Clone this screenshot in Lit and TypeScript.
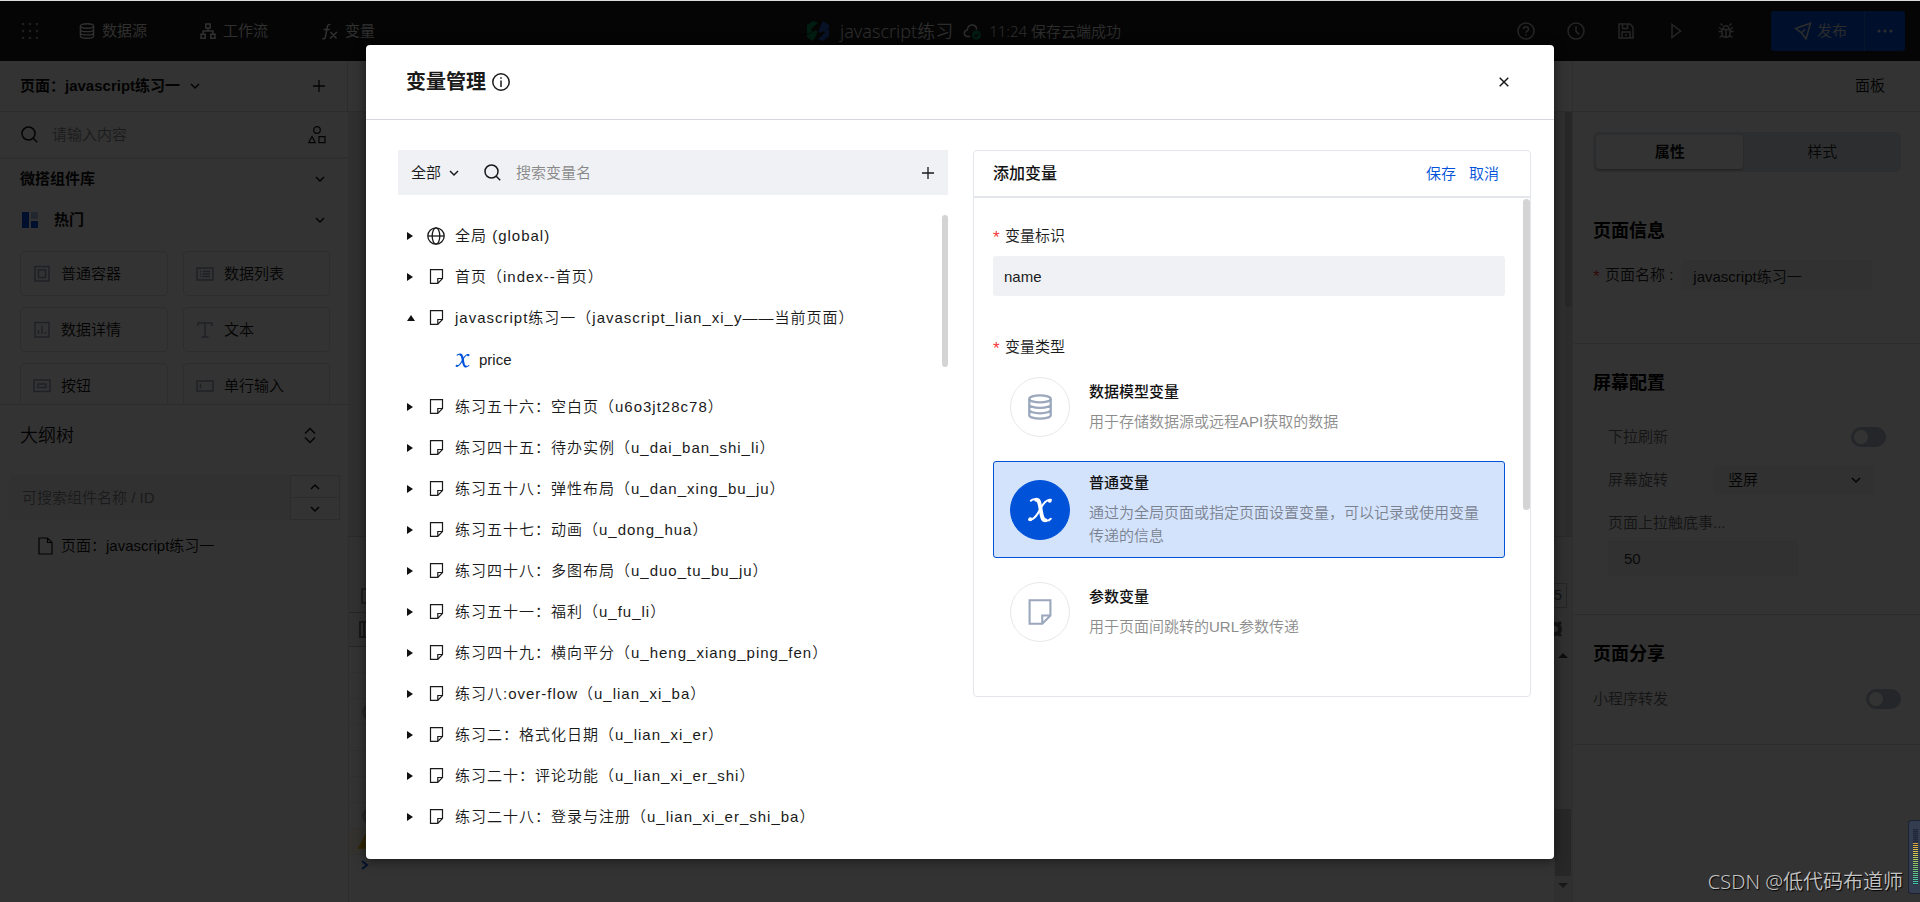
import { LitElement, html, css, svg, TemplateResult, SVGTemplateResult } from "lit";
import { customElement, state } from "lit/decorators.js";
import { classMap } from "lit/directives/class-map.js";

const icon = (size: number, body: SVGTemplateResult, height = size): TemplateResult =>
  html`<svg class="icon" aria-hidden="true" width=${size} height=${height} viewBox="0 0 ${size} ${height}"
    fill="none" stroke="currentColor" stroke-width="1.5">${body}</svg>`;

const icons = {
  grid: () => icon(16, svg`${[1, 8, 15].map((y) => [1, 8, 15].map((x) =>
    svg`<circle cx=${x} cy=${y} r="1.3" fill="currentColor" stroke="none"/>`))}`),
  database: (s = 16) => html`<svg class="icon" aria-hidden="true" width=${s} height=${s} viewBox="0 0 16 16"
    fill="none" stroke="currentColor" stroke-width="1.4"><ellipse cx="8" cy="3" rx="6.6" ry="2.2"/>
    <path d="M1.4 3v10c0 1.2 2.9 2.2 6.6 2.2s6.6-1 6.6-2.2V3M1.4 6.4c0 1.2 2.9 2.2 6.6 2.2s6.6-1 6.6-2.2M1.4 9.7c0 1.2 2.9 2.2 6.6 2.2s6.6-1 6.6-2.2"/></svg>`,
  workflow: () => icon(16, svg`<path d="M5.8 1h4.4v4H5.8zM1 11.2h4.2v4H1zM10.8 11.2H15v4h-4.2zM8 5v3M3.1 11V8h9.8v3"/>`),
  fx: () => icon(17, svg`<path d="M9.5 1.6C7.6.9 6.7 1.9 6.3 4L4.5 13.5c-.4 2-1.2 2.7-3.2 2.2M2.7 6.5h6M9.5 9l6 6.5M16 9l-7 6.5"/>`),
  help: () => icon(18, svg`<circle cx="9" cy="9" r="8"/><path d="M6.5 7.200c0-3.200 5-3.200 5 0 0 1.700-2.500 1.700-2.500 3.600M9 12.200v1.500"/>`),
  clock: () => icon(18, svg`<circle cx="9" cy="9" r="8"/><path d="M9 4v5.200l3.200 3.200"/>`),
  save: () => icon(18, svg`<path d="M2 2h11l3 3v11H2zM5 16v-6h8v6M5.500 2v4.500h5V2M9 12v2"/>`),
  play: () => icon(18, svg`<path d="M5 2.500v13L13.500 9z"/>`),
  bug: () => icon(18, svg`<path d="M5 7.500h8v4c0 5-8 5-8 0zM6 7.300c0-4.800 6-4.800 6 0M9 8v7M5.500 3.500l-2-2M12.500 3.500l2-2M1.500 9.500H5M13 9.500h3.500M2 5.500l3 2M16 5.500l-3 2M2.500 15.500l3-2M15.500 15.500l-3-2"/>`),
  plane: () => icon(18, svg`<path d="M1.500 6.500L16.500 1.200 12 17 7.500 10.800zM7.500 10.800l3.500-3.600"/>`),
  more: () => icon(16, svg`<g fill="currentColor" stroke="none"><circle cx="2" cy="3" r="1.500"/><circle cx="8" cy="3" r="1.500"/><circle cx="14" cy="3" r="1.500"/></g>`, 6),
  logo: () => icon(24, svg`<g stroke="none"><path fill="#088a58" d="M7 1l5 2L6 8c-1.500 1.500-1 2.500.5 3.500L1 14V5zM1 15l9-5 1.500 2L9 18l-3 3-5-4z"/>
    <path fill="#2a5bc4" d="M17 1l6 4v3l-9 5-1.500-2L15 5zM23 9v7l-6 5-5-2 6-5c1.500-1.500 1-2.500-.5-3.500z"/></g>`, 22),
  cloud: () => icon(19, svg`<path d="M7 13.500H4.500C0 13 .5 7.500 4.300 7 5 .5 13 .5 13.700 6.500"/>
    <circle cx="13.500" cy="12" r="4.500" fill="#088a58" stroke="none"/><path stroke="#222" d="M11.500 12l1.500 1.500 2.500-2.700"/>`, 17),
  down: (s = 10) => html`<svg class="icon" aria-hidden="true" width=${s} height=${s} viewBox="0 0 10 10" fill="none"
    stroke="currentColor" stroke-width="1.5"><path d="M1 3l4 4 4-4"/></svg>`,
  up: () => icon(10, svg`<path d="M1 7l4-4 4 4"/>`),
  plus: () => icon(12, svg`<path stroke-width="1.300" d="M6 0v12M0 6h12"/>`),
  search: () => icon(17, svg`<circle cx="7.500" cy="7.500" r="6.500"/><path d="M12.200 12.200l4 4"/>`),
  shapes: () => icon(18, svg`<g stroke-width="1.200"><circle cx="9" cy="4" r="3.300"/><path d="M4 10.500l-3.300 6.200h6.600zM11 10.700h6v6h-6z"/></g>`),
  hot: () => icon(16, svg`<g stroke="none"><path fill="#0052d9" d="M0 0h7v16H0zM9 9h7v7H9z"/><path fill="#a9bfe8" d="M9 0h7v7H9z"/></g>`),
  sort: () => icon(12, svg`<path d="M1 6.500l5-5 5 5M1 10.500l5 5 5-5"/>`, 17),
  file: () => icon(15, svg`<path stroke-width="1.200" d="M1 1h8.500L14 5.500V17H1zM9.500 1v4.500H14"/>`, 18),
  container: () => icon(18, svg`<rect x="2" y="1.500" width="14" height="14.500"/><rect x="5.500" y="5" width="7" height="7.500"/>`),
  list: () => icon(18, svg`<rect x="1" y="3" width="16" height="12"/><path d="M4 6.500h1M6.500 6.500H14M4 9h1M6.500 9H14M4 11.500h1M6.500 11.500H14"/>`),
  chart: () => icon(18, svg`<rect x="2" y="1.500" width="14" height="14.500"/><path d="M5.500 13V9M9 13V4.500M12.500 13v-2"/>`),
  text: () => icon(18, svg`<path d="M2 5V2h14v3M9 2v14M5.500 16h7"/>`),
  button: () => icon(18, svg`<rect x="1" y="3" width="16" height="11.500"/><rect x="5" y="7" width="8" height="3.500"/>`),
  input: () => icon(18, svg`<rect x="1" y="4" width="16" height="10"/><path d="M4.500 6.500v5"/>`),
  info: () => icon(18, svg`<circle cx="9" cy="9" r="8.200"/><path d="M9 7.500V14M9 4.200v1.600"/>`),
  close: () => icon(10, svg`<path d="M.7.700l8.600 8.600M9.300.700L.7 9.300"/>`),
  globe: () => icon(18, svg`<g stroke-width="1.300"><circle cx="9" cy="9" r="8.200"/><ellipse cx="9" cy="9" rx="3.800" ry="8.200"/><path d="M1 9h16"/></g>`),
  page: (s = 15) => html`<svg class="icon" aria-hidden="true" width=${s} height=${s} viewBox="0 0 15 15" fill="none"
    stroke="currentColor" stroke-width="1.200"><path d="M1.500.7h12v8.800l-4.700 4.800H1.500zM13.500 9.500H8.800v4.800"/></svg>`,
  variable: (s: number) => html`<svg class="icon" aria-hidden="true" width=${s} height=${s} viewBox="0 0 24 24" fill="none"
    stroke="currentColor" stroke-linecap="round"><path stroke-width="3.600" d="M8.500 2.500c3 0 3 3 4 8.500s1.300 10.500 4.500 10.500"/>
    <path stroke-width="1.800" d="M3.500 3.500C5 2 7.500 1.800 9 2.500M22 2.500c-5-.5-8 5-10 9S7 21.500 2 21M16 21.700c2 .5 4.500.3 6-1.700"/>
    <circle cx="21" cy="3.500" r="1.300" fill="currentColor"/><circle cx="3" cy="20.500" r="1.300" fill="currentColor"/></svg>`,
};

const base = css`
  *, *::before, *::after { box-sizing: border-box; }
  button, input, select { font: inherit; color: inherit; margin: 0; padding: 0; border: 0; background: none; border-radius: 0; outline: none; }
  button { cursor: pointer; text-align: left; }
  h1, h2, h3, p, ul { margin: 0; padding: 0; font-weight: inherit; font-size: inherit; list-style: none; }
  .icon { display: block; flex: none; }
  .grow { flex: 1; min-width: 0; }
  .hidden { position: absolute; width: 1px; height: 1px; overflow: hidden; clip-path: inset(50%); }
  ::placeholder { color: #888; opacity: 1; }
`;

@customElement("top-bar")
class TopBar extends LitElement {
  static styles = [base, css`
    .bar { display: grid; grid-template-columns: 1fr auto 1fr; align-items: center; height: 60px; padding: 0 15px 0 22px; background: #191919; color: #eee; }
    .nav, .title, .tools, .entry { display: flex; align-items: center; }
    .nav { gap: 53px; }
    .apps { margin-right: -12px; color: #999; display: flex; }
    .entry { gap: 7px; }
    .title { gap: 10px; font-family: "Noto Sans", "Noto Sans CJK SC", sans-serif; font-size: 18px; font-weight: 350; color: #ddd; }
    .status { font-size: 15px; margin-left: -3px; }
    .tools { justify-content: flex-end; gap: 32px; color: #bbb; }
    .publish { display: flex; height: 40px; margin-left: 4px; background: #0052d9; border-radius: 3px; overflow: hidden; color: #ddd; }
    .send { display: flex; align-items: center; gap: 5px; padding: 0 17px 0 23px; }
    .extra { display: flex; align-items: center; padding: 0 12px; border-left: 1px solid #2a6de0; }
  `];
  render() {
    return html`<header class="bar">
      <nav class="nav">
        <button class="apps" aria-label="应用">${icons.grid()}</button>
        <button class="entry">${icons.database()}数据源</button>
        <button class="entry">${icons.workflow()}工作流</button>
        <button class="entry">${icons.fx()}变量</button>
      </nav>
      <div class="title">${icons.logo()}<span>javascript练习</span>${icons.cloud()}<span class="status">11:24 保存云端成功</span></div>
      <div class="tools">
        <button aria-label="帮助">${icons.help()}</button>
        <button aria-label="历史">${icons.clock()}</button>
        <button aria-label="保存">${icons.save()}</button>
        <button aria-label="预览">${icons.play()}</button>
        <button aria-label="调试">${icons.bug()}</button>
        <div class="publish"><button class="send">${icons.plane()}发布</button><button class="extra" aria-label="更多">${icons.more()}</button></div>
      </div>
    </header>`;
  }
}

@customElement("side-bar")
class SideBar extends LitElement {
  static styles = [base, css`
    :host { display: flex; flex-direction: column; min-height: 0; background: #fff; color: #111; }
    .row { display: flex; align-items: center; flex: none; }
    .head { height: 51px; border-bottom: 1px solid #ddd; border-right: 1px solid #ddd; padding: 0 22px 0 20px; font-weight: 600; gap: 10px; }
    .search { height: 47px; border-bottom: 2px solid #eaeaea; padding: 0 22px 0 21px; gap: 14px; }
    .search input { width: 100%; }
    .push { margin-left: auto; }
    .palette { flex: 246 1 0; min-height: 0; overflow: hidden; border-bottom: 1px solid #ddd; }
    .group { height: 39px; padding: 0 23px 0 20px; font-weight: 600; justify-content: space-between; }
    .hot { height: 44px; padding: 0 23px 0 22px; gap: 16px; font-weight: 600; }
    .cards { display: grid; grid-template-columns: 148fr 147fr; gap: 11px 15px; padding: 9px 18px 9px 20px; }
    .card { display: flex; align-items: center; gap: 10px; height: 45px; padding-left: 12px; border: 1px solid #e0e2e6; border-radius: 4px; }
    .card .icon { color: #98a2b7; }
    .outline { flex: 498 1 0; min-height: 0; }
    .title { height: 61px; padding: 0 32px 0 20px; font-size: 18px; justify-content: space-between; }
    .finder { margin: 9px 8px 0 10px; height: 45px; background: #f3f4f7; }
    .finder input { flex: 1; min-width: 0; height: 100%; padding: 0 12px; }
    .steps { display: flex; flex-direction: column; width: 50px; height: 45px; border: 1px solid #ddd; background: #fff; }
    .steps button { flex: 1; display: flex; align-items: center; justify-content: center; }
    .steps button + button { border-top: 1px solid #ddd; }
    .node { height: 51px; padding-left: 38px; gap: 8px; width: 100%; }
  `];
  private cards: [string, () => TemplateResult][] = [
    ["普通容器", icons.container], ["数据列表", icons.list], ["数据详情", icons.chart],
    ["文本", icons.text], ["按钮", icons.button], ["单行输入", icons.input],
  ];
  render() {
    return html`
      <div class="row head"><span>页面：javascript练习一</span>${icons.down()}<button class="push" aria-label="新建页面">${icons.plus()}</button></div>
      <label class="row search">${icons.search()}<input aria-label="搜索组件" placeholder="请输入内容">${icons.shapes()}</label>
      <section class="palette">
        <h2 class="row group">微搭组件库${icons.down()}</h2>
        <h3 class="row hot">${icons.hot()}热门<span class="push">${icons.down()}</span></h3>
        <div class="cards">${this.cards.map(([name, draw]) => html`<button class="card">${draw()}${name}</button>`)}</div>
      </section>
      <section class="outline">
        <h2 class="row title">大纲树${icons.sort()}</h2>
        <div class="row finder"><input aria-label="搜索大纲" placeholder="可搜索组件名称 / ID">
          <div class="steps"><button aria-label="上一个">${icons.up()}</button><button aria-label="下一个">${icons.down()}</button></div></div>
        <button class="row node">${icons.file()}页面：javascript练习一</button>
      </section>`;
  }
}

@customElement("work-canvas")
class WorkCanvas extends LitElement {
  static styles = [base, css`
    :host { display: flex; flex-direction: column; min-width: 0; background: #fff; }
    .head { height: 51px; border-bottom: 1px solid #ddd; }
    .stage { flex: 425 1 0; display: flex; justify-content: flex-end; background: #eaeaea; border-bottom: 1px solid #d0d0d0; }
    .bar { width: 7px; background: #dcdcdc; }
    .thumb { height: 46%; background: #c0c0c0; border-radius: 0 0 4px 4px; }
    .console { flex: 365 1 0; display: flex; justify-content: space-between; border-left: 1px solid #e0e0e0; }
    .log { flex: 1; display: flex; flex-direction: column; }
    .tab { height: 76px; padding: 51px 0 0 12px; background: #f3f6f8; border-bottom: 1px solid #bbb; color: #777; }
    .tab + .tab { height: 34px; padding: 8px 0 0 10px; }
    .line { height: 26px; border-bottom: 1px solid #eee; padding-left: 13px; display: flex; align-items: center; }
    .dot { width: 18px; height: 18px; border-radius: 9px; background: #c4bccb; }
    .warn { background: #fffbe5; padding-left: 9px; color: #f5b400; }
    .prompt { padding: 5px 0 0 12px; color: #1a56db; }
    .edge { width: 18px; display: flex; flex-direction: column; align-items: center; background: #f1f1f1; }
    .chip { align-self: flex-start; width: 13px; height: 25px; margin-top: 46px; border: 1px solid #bbb; border-left: 0; color: #555; font-size: 14px; line-height: 23px; }
    .gear { margin: 13px 0 16px; align-self: flex-start; color: #666; width: 8px; overflow: hidden; }
    .caret { border: 5px solid transparent; border-bottom: 5px solid #444; border-top: 0; }
    .caret.down { border-top: 5px solid #777; border-bottom: 0; margin: 7px 0 14px; }
    .track { flex: 1; width: 16px; display: flex; flex-direction: column; justify-content: flex-end; }
    .slab { height: 67px; background: #c1c1c1; }
  `];
  render() {
    return html`<div class="head"></div>
      <div class="stage"><div class="bar"><div class="thumb"></div></div></div>
      <div class="console">
        <div class="log">
          <div class="tab">${icon(14, svg`<rect x="1" y="1" width="12" height="14"/>`, 16)}</div>
          <div class="tab">${icon(16, svg`<path d="M1 1h14v15H1zM5 1v15" stroke-width="2"/>`, 17)}</div>
          ${[0, 0, 1, 0, 0, 0, 1].map((d) => html`<div class="line">${d ? html`<span class="dot"></span>` : ""}</div>`)}
          <div class="line warn">${icon(16, svg`<path d="M8 1l7 13H1z" fill="currentColor"/><path stroke="#fff" d="M8 5v5M8 11.500v1.500"/>`, 15)}</div>
          <div class="prompt">${icon(8, svg`<path d="M1 1l5 4-5 4" stroke-width="2"/>`, 10)}</div>
        </div>
        <div class="edge">
          <div class="chip">5</div>
          <div class="gear">${icon(12, svg`<circle cx="1" cy="8" r="5" stroke-width="4"/><path stroke-width="3" d="M4 4l3-3M4 12l3 3"/>`, 16)}</div>
          <i class="caret"></i>
          <div class="track"><div class="slab"></div></div>
          <i class="caret down"></i>
        </div>
      </div>`;
  }
}

@customElement("property-panel")
class PropertyPanel extends LitElement {
  static styles = [base, css`
    :host { display: flex; flex-direction: column; background: #fff; color: #222; border-left: 1px solid #e6e6e6; }
    .head { height: 51px; border-bottom: 1px solid #ddd; padding-right: 35px; display: flex; align-items: center; justify-content: flex-end; color: #111; }
    .tabs { display: flex; margin: 20px 19px 0 20px; height: 40px; padding: 3px 0 3px 3px; background: #e0e5ec; border-radius: 6px; }
    .tab { flex: 157; text-align: center; border-radius: 4px; }
    .tab.on { flex: 147; background: #fff; font-weight: 600; color: #111; box-shadow: 0 1px 2px #999; }
    .section { padding: 0 19px; border-bottom: 1px solid #ddd; margin-left: 1px; }
    .first { padding-top: 46px; padding-bottom: 53px; }
    .second { padding-top: 26px; padding-bottom: 38px; }
    .third { padding-top: 26px; padding-bottom: 33px; }
    .title { font-size: 18px; font-weight: 700; line-height: 26px; color: #000; }
    .row { display: flex; align-items: center; }
    .name { margin-top: 16px; height: 30px; gap: 3px; }
    .star { color: #f5373c; width: 9px; font-size: 17px; line-height: 18px; height: 14px; }
    .name input { flex: 1; margin: 0 29px 0 6px; height: 30px; background: #f3f3f5; padding: 0 11px; min-width: 0; }
    .muted { color: #666; }
    .indent { padding: 0 15px; }
    .toggle { appearance: none; width: 35px; height: 20px; border-radius: 10px; background: #b4bccb; padding: 3px; margin-left: auto; }
    .toggle::before { content: ""; display: block; width: 14px; height: 14px; border-radius: 7px; background: #fff; }
    .pull { margin-top: 29px; height: 24px; }
    .turn { margin-top: 16px; height: 30px; gap: 46px; }
    .picker { flex: 1; display: flex; align-items: center; background: #f3f3f5; height: 30px; padding: 0 12px 0 14px; margin-right: 13px; color: #111; }
    .picker select { appearance: none; flex: 1; }
    .reach { margin-top: 17px; line-height: 22px; }
    .count { display: block; width: 190px; height: 35px; margin: 7px 15px 0; padding: 0 15px; background: #f3f3f5; border: 1px solid #eee; color: #333; }
    .share { margin-top: 20px; height: 24px; }
  `];
  render() {
    return html`
      <div class="head">面板</div>
      <div class="tabs"><button class="tab on">属性</button><button class="tab">样式</button></div>
      <section class="section first">
        <h2 class="title">页面信息</h2>
        <label class="row name"><span class="star">*</span><span>页面名称 :</span><input .value=${"javascript练习一"}></label>
      </section>
      <section class="section second">
        <h2 class="title">屏幕配置</h2>
        <label class="row muted indent pull">下拉刷新<input class="toggle" type="checkbox"></label>
        <label class="row muted indent turn">屏幕旋转<span class="picker"><select><option>竖屏</option></select>${icons.down()}</span></label>
        <label class="muted"><p class="indent reach">页面上拉触底事...</p><input class="count" .value=${"50"}></label>
      </section>
      <section class="section third">
        <h2 class="title">页面分享</h2>
        <label class="row muted share">小程序转发<input class="toggle" type="checkbox"></label>
      </section>`;
  }
}

interface Scope { label: string; glyph?: "globe"; variables?: string[]; }

@customElement("variable-dialog")
class VariableDialog extends LitElement {
  static styles = [base, css`
    :host { display: block; background: #fff; border-radius: 4px; color: #1a1a1a; }
    .head { display: flex; align-items: center; height: 75px; padding: 0 45px 0 40px; border-bottom: 1px solid #d5d8e2; }
    .head h1 { font-size: 20px; font-weight: 600; margin-right: 6px; line-height: 28px; }
    .close { margin-left: auto; }
    .body { display: grid; grid-template-columns: 550fr 558fr; gap: 25px; align-items: start; padding: 30px 23px 22px 32px; }
    .filter { display: flex; align-items: center; height: 45px; padding: 0 14px 0 13px; background: #f0f1f5; }
    .kind { display: flex; align-items: center; gap: 7px; margin-right: 25px; }
    .kind select { appearance: none; }
    .filter input { flex: 1; min-width: 0; margin-left: 15px; height: 100%; }
    .tree { position: relative; margin-top: 20px; }
    .tree::after { content: ""; position: absolute; top: 0; right: 0; width: 6px; height: 152px; border-radius: 3px; background: #d4d4d4; }
    .scope { display: flex; align-items: center; width: 100%; height: 41px; padding-left: 9px; letter-spacing: 1px; }
    .arrow { width: 22px; display: flex; }
    .arrow::before { content: ""; border: 4px solid transparent; border-left: 6px solid #111; border-right: 0; }
    .arrow.open::before { border: 4px solid transparent; border-bottom: 6px solid #111; border-top: 0; }
    .glyph { width: 26px; display: flex; }
    .glyph.wide { margin-left: -2px; width: 28px; }
    .item { display: flex; align-items: center; gap: 9px; width: 100%; height: 48px; padding-left: 57px; padding-bottom: 4px; }
    .item .icon { color: #0052d9; }
    .panel { position: relative; border: 1px solid #e3e6eb; border-radius: 4px; }
    .bar { display: flex; align-items: center; gap: 13px; height: 47px; padding: 0 31px 0 19px; border-bottom: 2px solid #e3e6eb; }
    .bar h2 { font-size: 16px; font-weight: 500; color: #111; flex: 1; }
    .bar button { color: #0052d9; }
    .form { padding: 27px 25px 47px 19px; line-height: 22px; }
    .form::after { content: ""; position: absolute; top: 48px; right: 0; width: 7px; height: 311px; border-radius: 4px; background: #d4d4d4; }
    .need { display: flex; gap: 4px; }
    .need::before { content: "*"; color: #f5373c; width: 8px; font-size: 17px; line-height: 26px; height: 22px; }
    .field { display: block; width: 100%; height: 40px; margin: 9px 0 40px; padding: 0 11px; background: #f0f1f5; border-radius: 3px; }
    .types { display: flex; flex-direction: column; gap: 17px; margin-top: 12px; }
    .type { display: flex; align-items: center; gap: 19px; min-height: 74px; padding: 10px 16px; border: 1px solid transparent; border-radius: 3px; cursor: pointer; }
    .type.on { background: #d4e3fc; border-color: #0052d9; }
    .disc { display: flex; align-items: center; justify-content: center; flex: none; width: 60px; height: 60px; margin: -4px 0; border: 1px solid #e8e8e8; border-radius: 50%; background: #fff; color: #9aa7bd; }
    .on .disc { background: #0052d9; border-color: #0052d9; color: #fff; }
    .type h3 { font-weight: 500; color: #111; margin-bottom: 7px; }
    .type p { color: #8c8c8c; line-height: 23px; }
    .on p { color: #7a8290; }
  `];
  @state() private kind = 1;
  private scopes: Scope[] = [
    { label: "全局 (global)", glyph: "globe" },
    { label: "首页（index--首页）" },
    { label: "javascript练习一（javascript_lian_xi_y——当前页面）", variables: ["price"] },
    { label: "练习五十六：空白页（u6o3jt28c78）" },
    { label: "练习四十五：待办实例（u_dai_ban_shi_li）" },
    { label: "练习五十八：弹性布局（u_dan_xing_bu_ju）" },
    { label: "练习五十七：动画（u_dong_hua）" },
    { label: "练习四十八：多图布局（u_duo_tu_bu_ju）" },
    { label: "练习五十一：福利（u_fu_li）" },
    { label: "练习四十九：横向平分（u_heng_xiang_ping_fen）" },
    { label: "练习八:over-flow（u_lian_xi_ba）" },
    { label: "练习二：格式化日期（u_lian_xi_er）" },
    { label: "练习二十：评论功能（u_lian_xi_er_shi）" },
    { label: "练习二十八：登录与注册（u_lian_xi_er_shi_ba）" },
  ];
  private types = [
    { name: "数据模型变量", note: "用于存储数据源或远程API获取的数据", draw: () => icons.database(26) },
    { name: "普通变量", note: "通过为全局页面或指定页面设置变量，可以记录或使用变量传递的信息", draw: () => icons.variable(26) },
    { name: "参数变量", note: "用于页面间跳转的URL参数传递", draw: () => icons.page(26) },
  ];
  render() {
    return html`
      <div class="head"><h1>变量管理</h1>${icons.info()}<button class="close" aria-label="关闭">${icons.close()}</button></div>
      <div class="body">
        <div>
          <div class="filter">
            <label class="kind"><select aria-label="范围"><option>全部</option></select>${icons.down()}</label>
            ${icons.search()}<input aria-label="搜索变量" placeholder="搜索变量名">
            <button aria-label="新增变量">${icons.plus()}</button>
          </div>
          <ul class="tree">${this.scopes.map((s) => html`<li>
            <button class="scope"><span class=${classMap({ arrow: true, open: !!s.variables })}></span>
              <span class=${classMap({ glyph: true, wide: !!s.glyph })}>${s.glyph ? icons.globe() : icons.page()}</span>${s.label}</button>
            ${(s.variables ?? []).map((v) => html`<button class="item">${icons.variable(15)}${v}</button>`)}</li>`)}</ul>
        </div>
        <form class="panel" @submit=${(e: Event) => e.preventDefault()}>
          <div class="bar"><h2>添加变量</h2><button type="button">保存</button><button type="button">取消</button></div>
          <div class="form">
            <label class="need" for="ident">变量标识</label>
            <input class="field" id="ident" .value=${"name"}>
            <div class="need">变量类型</div>
            <div class="types">${this.types.map((t, i) => html`<label class=${classMap({ type: true, on: i === this.kind })}>
              <input class="hidden" type="radio" name="kind" .checked=${i === this.kind} @change=${() => (this.kind = i)}>
              <span class="disc">${t.draw()}</span><span class="grow"><h3>${t.name}</h3><p>${t.note}</p></span></label>`)}</div>
          </div>
        </form>
      </div>`;
  }
}

@customElement("app-root")
class AppRoot extends LitElement {
  static styles = [base, css`
    :host { display: flex; flex-direction: column; position: relative; height: 100vh; overflow: hidden; border-top: 1px solid #d9dddb; box-sizing: border-box;
      font: 350 15px/22px "Liberation Sans", "Noto Sans CJK SC", sans-serif; background: #fff; }
    .main { flex: 1; min-height: 0; display: grid; grid-template-columns: 348px 1fr 348px; }
    .mask { position: absolute; inset: 0; display: flex; align-items: flex-start; justify-content: center; padding-top: 44px; background: rgba(0, 0, 0, 0.8); }
    .dialog { flex: 0 1 1188px; box-shadow: 0 2px 12px rgba(0, 0, 0, 0.5); }
    .mark { position: absolute; right: 17px; bottom: 6px; font: 350 20px/28px "Noto Sans", "Noto Sans CJK SC", sans-serif; color: #c4c4c4; text-shadow: 1px 1px 1px #000; }
    .meter { position: absolute; right: 0; bottom: 8px; width: 12px; height: 74px; padding: 8px 2px 8px 4px; background: #343c50; border: 1px solid #1b2233; border-right: 0; border-radius: 4px 0 0 4px; }
    .level { height: 100%; background: repeating-linear-gradient(transparent 0 1px, #2b3244 1px 2px), linear-gradient(#20283c 24%, #e0a63c 26%, #d6cb52 45%, #86c468 65%, #38c9b0); }
  `];
  render() {
    return html`<top-bar></top-bar>
      <main class="main"><side-bar></side-bar><work-canvas></work-canvas><property-panel></property-panel></main>
      <div class="mask"><variable-dialog class="dialog" role="dialog" aria-label="变量管理"></variable-dialog></div>
      <div class="mark">CSDN @低代码布道师</div>
      <div class="meter"><div class="level"></div></div>`;
  }
}
